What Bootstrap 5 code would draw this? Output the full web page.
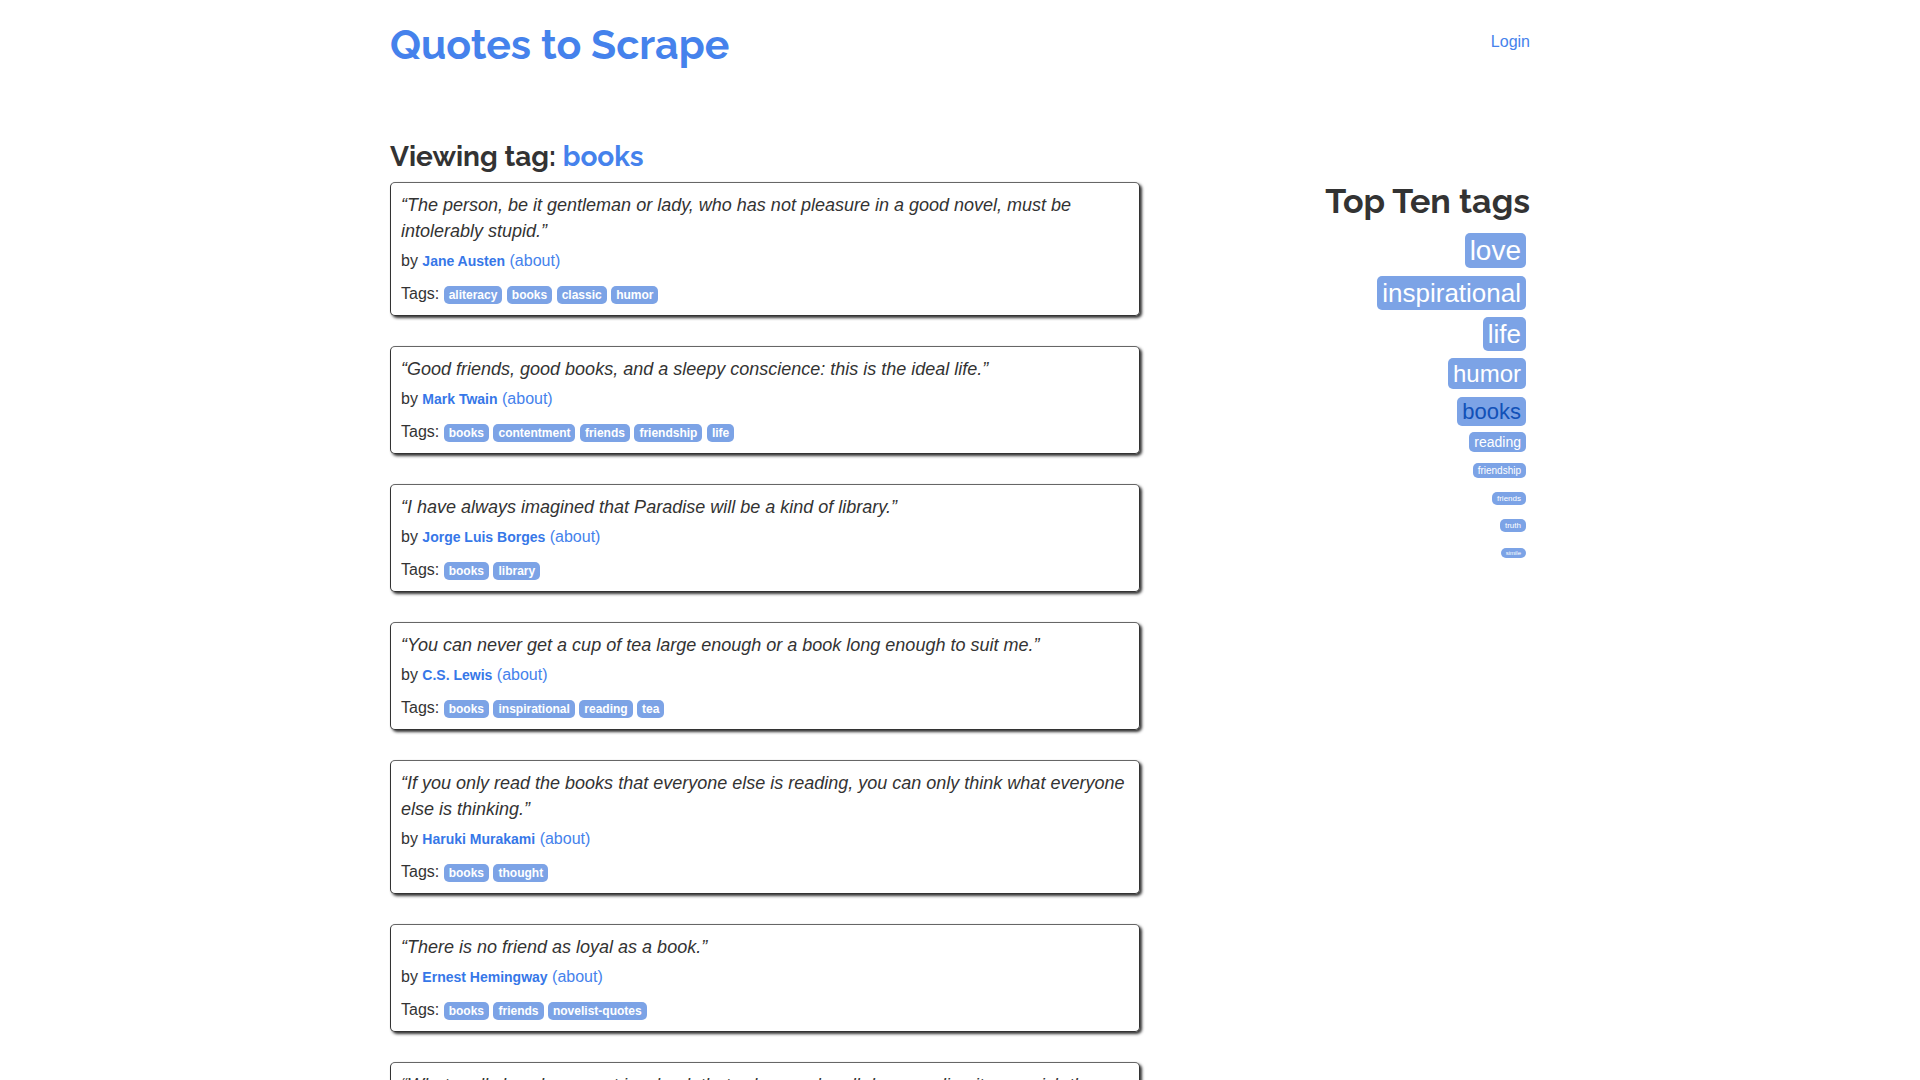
<!DOCTYPE html>
<html lang="en">
<head>
<meta charset="utf-8">
<meta name="viewport" content="width=device-width, initial-scale=1">
<title>Quotes to Scrape</title>
<link href="https://cdn.jsdelivr.net/npm/bootstrap@5.3.0/dist/css/bootstrap.min.css" rel="stylesheet">
<style>
body { font-family: "Liberation Sans", Arial, sans-serif; font-size: 16px; line-height: 23px; color: #333; background: #fff; }
.page-wrap { max-width: 1170px; padding-left: 15px; padding-right: 15px; }
.page-wrap > .row { --bs-gutter-x: 30px; }
h1, h2, h3 { font-family: Raleway, Lato, sans-serif; font-weight: 700; margin: 0; }
h1 { font-size: 41px; line-height: 50px; }
h2 { font-size: 34px; line-height: 40px; }
h3 { font-size: 28px; line-height: 32px; }
a { color: #4582ec; text-decoration: none; }
a:hover { text-decoration: underline; }
.site-head { padding-top: 20px; padding-bottom: 71px; }
.login-line { padding-top: 10px; }
.quote-list { padding-top: 9px; }
.quote { padding: 9px 10px 10px; margin-bottom: 30px; border: 1px solid #333; border-top-color: #666; border-radius: 5px; box-shadow: 2px 2px 3px #333; }
.quote-text { font-size: 18px; line-height: 26px; font-style: italic; margin-bottom: 5px; }
.quote-tags { margin-top: 10px; }
.author { font-size: 14px; line-height: 1; font-weight: 700; color: #3677e8; }
.tag { padding: 2px 5px; border-radius: 5px; font-size: 12px; line-height: 1; font-weight: 700; color: #fff; background: #7ca3e6; }
.top-tags { padding-top: 40px; }
.top-tags ul { padding-top: 10px; }
.top-tags li { margin: 0 4px 4px 0; line-height: 1.43; }
.top-tags .tag { font-weight: 400; line-height: inherit; }
.top-tags .tag.current { color: #1151b8; }
.size-28 { font-size: 28px !important; }
.size-26 { font-size: 26px !important; }
.size-24 { font-size: 24px !important; }
.size-22 { font-size: 22px !important; }
.size-14 { font-size: 14px !important; }
.size-10 { font-size: 10px !important; }
.size-8 { font-size: 8px !important; }
.size-6 { font-size: 6px !important; }
</style>
<script src="https://cdn.jsdelivr.net/npm/bootstrap@5.3.0/dist/js/bootstrap.bundle.min.js" defer></script>
</head>
<body>
<div class="container page-wrap">
  <header class="row site-head">
    <div class="col-md-8"><h1><a href="#">Quotes to Scrape</a></h1></div>
    <div class="col-md-4 text-end login-line"><a href="#">Login</a></div>
  </header>
  <div class="row">
    <main class="col-md-8">
      <h3 class="view-title">Viewing tag: <a href="#">books</a></h3>
      <div class="quote-list">
        <div class="quote">
          <div class="quote-text">“The person, be it gentleman or lady, who has not pleasure in a good novel, must be intolerably stupid.”</div>
          <div>by <span class="author">Jane Austen</span> <a href="#">(about)</a></div>
          <div class="quote-tags">Tags: <a class="tag" href="#">aliteracy</a> <a class="tag" href="#">books</a> <a class="tag" href="#">classic</a> <a class="tag" href="#">humor</a></div>
        </div>
        <div class="quote">
          <div class="quote-text">“Good friends, good books, and a sleepy conscience: this is the ideal life.”</div>
          <div>by <span class="author">Mark Twain</span> <a href="#">(about)</a></div>
          <div class="quote-tags">Tags: <a class="tag" href="#">books</a> <a class="tag" href="#">contentment</a> <a class="tag" href="#">friends</a> <a class="tag" href="#">friendship</a> <a class="tag" href="#">life</a></div>
        </div>
        <div class="quote">
          <div class="quote-text">“I have always imagined that Paradise will be a kind of library.”</div>
          <div>by <span class="author">Jorge Luis Borges</span> <a href="#">(about)</a></div>
          <div class="quote-tags">Tags: <a class="tag" href="#">books</a> <a class="tag" href="#">library</a></div>
        </div>
        <div class="quote">
          <div class="quote-text">“You can never get a cup of tea large enough or a book long enough to suit me.”</div>
          <div>by <span class="author">C.S. Lewis</span> <a href="#">(about)</a></div>
          <div class="quote-tags">Tags: <a class="tag" href="#">books</a> <a class="tag" href="#">inspirational</a> <a class="tag" href="#">reading</a> <a class="tag" href="#">tea</a></div>
        </div>
        <div class="quote">
          <div class="quote-text">“If you only read the books that everyone else is reading, you can only think what everyone else is thinking.”</div>
          <div>by <span class="author">Haruki Murakami</span> <a href="#">(about)</a></div>
          <div class="quote-tags">Tags: <a class="tag" href="#">books</a> <a class="tag" href="#">thought</a></div>
        </div>
        <div class="quote">
          <div class="quote-text">“There is no friend as loyal as a book.”</div>
          <div>by <span class="author">Ernest Hemingway</span> <a href="#">(about)</a></div>
          <div class="quote-tags">Tags: <a class="tag" href="#">books</a> <a class="tag" href="#">friends</a> <a class="tag" href="#">novelist-quotes</a></div>
        </div>
        <div class="quote">
          <div class="quote-text">“What really knocks me out is a book that, when you're all done reading it, you wish the author that wrote it was a terrific friend of yours and you could call him up on the telephone whenever you felt like it. That doesn't happen much, though.”</div>
          <div>by <span class="author">J.D. Salinger</span> <a href="#">(about)</a></div>
          <div class="quote-tags">Tags: <a class="tag" href="#">authors</a> <a class="tag" href="#">books</a> <a class="tag" href="#">literature</a> <a class="tag" href="#">reading</a> <a class="tag" href="#">writing</a></div>
        </div>
      </div>
    </main>
    <aside class="col-md-4 text-end top-tags">
      <h2>Top Ten tags</h2>
      <ul class="list-unstyled">
        <li><a class="tag size-28" href="#">love</a></li>
        <li><a class="tag size-26" href="#">inspirational</a></li>
        <li><a class="tag size-26" href="#">life</a></li>
        <li><a class="tag size-24" href="#">humor</a></li>
        <li><a class="tag size-22 current" href="#">books</a></li>
        <li><a class="tag size-14" href="#">reading</a></li>
        <li><a class="tag size-10" href="#">friendship</a></li>
        <li><a class="tag size-8" href="#">friends</a></li>
        <li><a class="tag size-8" href="#">truth</a></li>
        <li><a class="tag size-6" href="#">simile</a></li>
      </ul>
    </aside>
  </div>
</div>
</body>
</html>
